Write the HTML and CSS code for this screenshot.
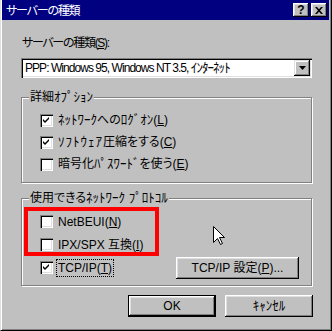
FILE: index.html
```html
<!DOCTYPE html>
<html lang="ja">
<head>
<meta charset="utf-8">
<link rel="stylesheet" href="styles.css">
</head>
<body>
<div class="window">
  <div class="titlebar">
    <span class="title">サーバーの種類</span>
    <div class="tb-buttons">
      <span class="tbtn help">?</span>
      <span class="tbtn close"><svg width="8" height="7" viewBox="0 0 8 7"><path d="M0 0h2l2 2.3 2-2.3h2l-3 3.5 3 3.5h-2l-2-2.3-2 2.3h-2l3-3.5z" fill="#000"/></svg></span>
    </div>
  </div>
  <div class="content">
    <div class="label">サーバーの種類(<u>S</u>):</div>
    <div class="combo">
      <span class="combo-text">PPP: Windows 95, Windows NT 3.5, <span class="hk">ｲﾝﾀｰﾈｯﾄ</span></span>
      <span class="combo-btn"><svg width="7" height="4" viewBox="0 0 7 4"><path d="M0 0h7l-3.5 4z" fill="#000"/></svg></span>
    </div>
    <div class="group g1">
      <span class="legend">詳細<span class="hk">ｵﾌﾟｼｮﾝ</span></span>
      <div class="row"><span class="box"><svg class="tick" width="9" height="9" viewBox="0 0 9 9"><path d="M1 3L3 5L7 1V3L3 7L1 5Z" fill="#000"/></svg></span><span class="text"><span class="hk">ﾈｯﾄﾜｰｸ</span>への<span class="hk">ﾛｸﾞｵﾝ</span>(<u>L</u>)</span></div>
      <div class="row"><span class="box"><svg class="tick" width="9" height="9" viewBox="0 0 9 9"><path d="M1 3L3 5L7 1V3L3 7L1 5Z" fill="#000"/></svg></span><span class="text"><span class="hk wide">ｿﾌﾄｳｪｱ</span>圧縮をする(<u>C</u>)</span></div>
      <div class="row"><span class="box"></span><span class="text">暗号化<span class="hk">ﾊﾟｽﾜｰﾄﾞ</span>を使う(<u>E</u>)</span></div>
    </div>
    <div class="group g2">
      <span class="legend">使用できる<span class="hk">ﾈｯﾄﾜｰｸ ﾌﾟﾛﾄｺﾙ</span></span>
      <div class="row r2"><span class="box"></span><span class="text">NetBEUI(<u>N</u>)</span></div>
      <div class="row r2"><span class="box"></span><span class="text">IPX/SPX 互換(<u>I</u>)</span></div>
      <div class="row r2"><span class="box"><svg class="tick" width="9" height="9" viewBox="0 0 9 9"><path d="M1 3L3 5L7 1V3L3 7L1 5Z" fill="#000"/></svg></span><span class="text focus">TCP/IP(<u>T</u>)</span><span class="btn settings">TCP/IP 設定(<u>P</u>)...</span></div>
    </div>
    <div class="actions">
      <span class="btn default">OK</span>
      <span class="btn"><span class="hk">ｷｬﾝｾﾙ</span></span>
    </div>
  </div>
</div>
<div class="annotation"></div>
<svg class="cursor" width="12" height="19" viewBox="0 0 12 19"><path d="M0.5 0.5V16.5L4.5 12.5L7.5 18.5L9.5 17.5L6.5 11.5H11.5Z" fill="#fff" stroke="#000" stroke-width="1"/></svg>
</body>
</html>
```
FILE: styles.css
```css
html, body {
  margin: 0;
  padding: 0;
  background: #c0c0c0;
}
body {
  font-family: "Liberation Sans", "Noto Sans CJK JP", sans-serif;
  font-size: 12px;
  color: #000;
  font-feature-settings: "palt";
}
.hk {
  font-size: 13px;
}
.hk.wide {
  letter-spacing: 1px;
}
.window {
  position: relative;
  width: 332px;
  height: 331px;
  box-sizing: border-box;
  background: #c0c0c0;
  border-left: 1px solid #dfdfdf;
  border-right: 1px solid #000;
  border-bottom: 1px solid #000;
  box-shadow: inset 1px 0 #fff, inset -1px -1px #808080;
  padding-left: 1px;
  display: flex;
  flex-direction: column;
}
.titlebar {
  height: 20px;
  margin-right: 2px;
  background: #000080;
  color: #fff;
  display: flex;
  align-items: center;
  justify-content: space-between;
  padding: 0 2px 0 4px;
}
.title {
  font-family: "Noto Sans CJK JP", sans-serif;
  font-size: 12px;
  line-height: 14px;
  letter-spacing: -1.2px;
}
.tb-buttons {
  display: flex;
  gap: 2px;
}
.tbtn {
  width: 16px;
  height: 14px;
  box-sizing: border-box;
  background: #c0c0c0;
  box-shadow: inset -1px -1px #000, inset 1px 1px #fff, inset -2px -2px #808080, inset 2px 2px #dfdfdf;
  display: flex;
  align-items: center;
  justify-content: center;
  color: #000;
}
.help {
  font-weight: bold;
  font-size: 12px;
  line-height: 12px;
  padding-bottom: 1px;
}
.content {
  padding: 0 19px 0 19px;
  display: flex;
  flex-direction: column;
}
.label {
  margin-top: 16px;
  line-height: 14px;
  padding-left: 1px;
  letter-spacing: -1.3px;
}
u {
  text-decoration: underline;
  text-underline-offset: 1px;
}
.combo {
  margin-top: 8px;
  height: 20px;
  box-sizing: border-box;
  background: #fff;
  box-shadow: inset 1px 1px #808080, inset 2px 2px #000, inset -1px -1px #fff, inset -2px -2px #dfdfdf;
  display: flex;
  align-items: center;
  justify-content: space-between;
  padding: 2px;
}
.combo-text {
  padding-left: 2px;
  line-height: 14px;
  letter-spacing: -0.95px;
}
.combo-btn {
  width: 16px;
  height: 16px;
  box-sizing: border-box;
  background: #c0c0c0;
  box-shadow: inset -1px -1px #000, inset 1px 1px #dfdfdf, inset -2px -2px #808080, inset 2px 2px #fff;
  display: flex;
  align-items: center;
  justify-content: center;
}
.group {
  position: relative;
  border: 1px solid #808080;
  box-shadow: inset 1px 1px #fff, 1px 1px #fff;
  box-sizing: border-box;
  padding: 11px 12px 0 18px;
}
.g1 {
  margin-top: 19px;
  height: 86px;
}
.g2 {
  margin-top: 15px;
  height: 88px;
}
.legend {
  position: absolute;
  top: -8px;
  left: 7px;
  padding: 0 1px;
  background: #c0c0c0;
  line-height: 14px;
}
.row {
  height: 22px;
  display: flex;
  align-items: center;
}
.row.r2 {
  height: 23px;
}
.box {
  width: 13px;
  height: 13px;
  box-sizing: border-box;
  background: #fff;
  box-shadow: inset 1px 1px #808080, inset 2px 2px #000, inset -1px -1px #fff, inset -2px -2px #dfdfdf;
  display: flex;
  align-items: center;
  justify-content: center;
  flex: none;
}
.tick {
  display: block;
}
.text {
  margin-left: 5px;
  line-height: 14px;
}
.text.focus {
  margin-left: 4px;
  padding: 1px 1px;
  outline: 1px dotted #000;
}
.btn {
  height: 22px;
  box-sizing: border-box;
  background: #c0c0c0;
  box-shadow: inset -1px -1px #000, inset 1px 1px #fff, inset -2px -2px #808080, inset 2px 2px #dfdfdf;
  display: flex;
  align-items: center;
  justify-content: center;
  width: 88px;
  line-height: 14px;
}
.btn.settings {
  width: 123px;
  margin-left: auto;
}
.btn.default {
  border: 1px solid #000;
}
.actions {
  margin-top: 9px;
  margin-right: -1px;
  display: flex;
  justify-content: flex-end;
  gap: 9px;
}
.annotation {
  position: absolute;
  left: 24px;
  top: 207px;
  width: 135px;
  height: 49px;
  box-sizing: border-box;
  border: 4px solid #ff0000;
}
.cursor {
  position: absolute;
  left: 213px;
  top: 226px;
}
```
